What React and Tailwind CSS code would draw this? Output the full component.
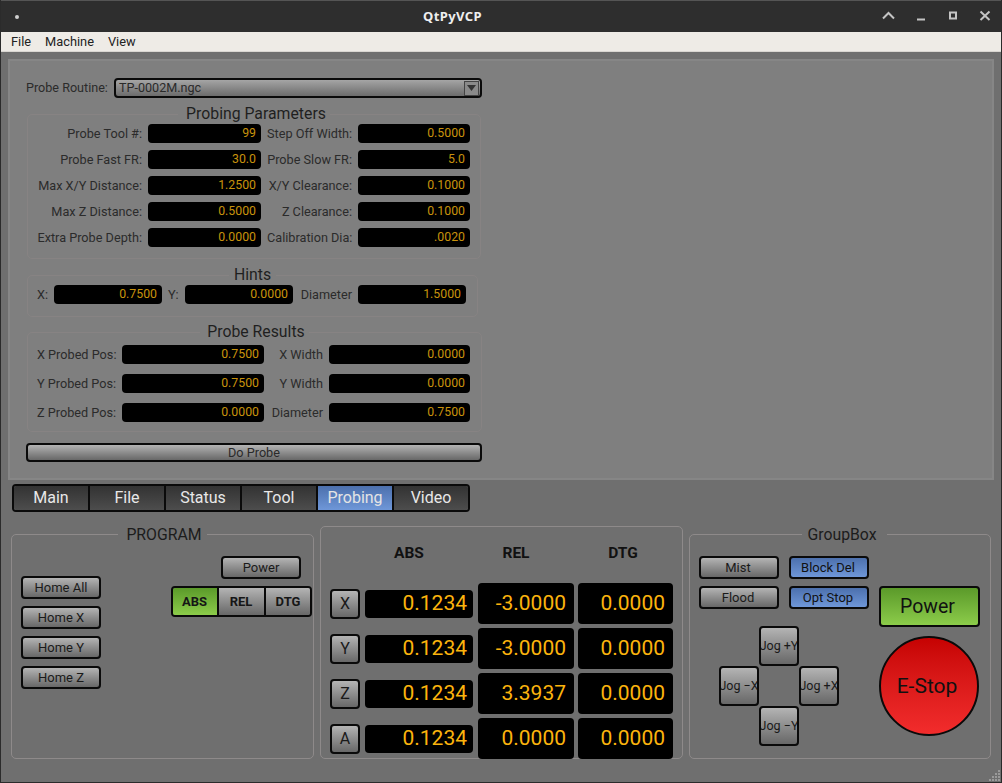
const btn = "border-2 border-[#0a0a0a] bg-gradient-to-b from-[#b4b4b4] to-[#686868] text-[#1a1a1a] rounded-[4px] flex items-center justify-center whitespace-nowrap overflow-hidden";
const blue = "border-2 border-[#0a0a0a] bg-gradient-to-b from-[#4c70ad] to-[#6f97d8] text-[#111] rounded-[4px] flex items-center justify-center whitespace-nowrap overflow-hidden";

function Field({ children, cls = "h-[19px]" }) {
  return <div className={`bg-black rounded-[4px] text-right pr-[5px] text-[#c8920c] text-[12.3px] leading-[19px] ${cls}`}>{children}</div>;
}
function Lbl({ children, left }) {
  return <div className={`text-[12.7px] leading-[19px] text-[#2b2b2b] whitespace-nowrap ${left ? "text-left" : "text-right"}`}>{children}</div>;
}
function Group({ title, cls, children, dim, legendCls = "px-[5px]" }) {
  return (
    <fieldset className={`border rounded-[5px] ${dim ? "border-[#878383]" : "border-[#8e8a8a]"} ${cls}`}>
      <legend className={`mx-auto leading-[16px] text-[15.8px] ${dim ? "text-[#1f1f1f]" : "text-[#1c1c1c] pt-px"} ${legendCls}`}>{title}</legend>
      {children}
    </fieldset>
  );
}
function Tab({ children, active, last }) {
  return (
    <div className={`${last ? "flex-1" : "w-[76px] border-r-[2px] border-[#0a0a0a]"} shrink-0 h-full flex items-center justify-center text-[16px] ${active ? "bg-gradient-to-b from-[#4c70ad] to-[#6f97d8] text-[#e4e4e4]" : "bg-gradient-to-b from-[#333333] to-[#4d4d4d] text-[#e8e8e8]"}`}>{children}</div>
  );
}
function Jog({ children, cls }) {
  return <div className={`w-[40px] h-[40px] text-[12.5px] ${btn} ${cls}`}>{children}</div>;
}
function DroRow({ axis, abs, rel, dtg }) {
  const big = "bg-black rounded-[4px] text-[#fcb40d] text-[21px] text-right flex items-center justify-end";
  return (
    <div className="flex items-center h-[41px]">
      <div className={`w-[30px] h-[30px] text-[16px] ${btn}`}>{axis}</div>
      <div className={`w-[108px] h-[28px] ml-[5px] pr-[6px] ${big}`}>{abs}</div>
      <div className={`w-[96px] h-[41px] ml-[5px] pr-[8px] ${big}`}>{rel}</div>
      <div className={`w-[95px] h-[41px] ml-[4px] pr-[8px] ${big}`}>{dtg}</div>
    </div>
  );
}

export default function App() {
  return (
    <div className="w-[1002px] h-[783px] bg-[#6f6f6f] flex flex-col overflow-hidden relative border-x border-b border-[#2b2b2b]" style={{ fontFamily: "Roboto, sans-serif" }}>
      <div className="h-[32px] shrink-0 bg-[#2e2e2e] border-t border-[#555] flex items-center text-[#d6d6d6] relative -mx-px">
        <div className="w-[4px] h-[4px] rounded-full bg-[#cfcfcf] ml-[15px]" />
        <div className="flex-1 text-center text-[13px] font-bold tracking-[0.4px] text-[#efefef] pl-[5px]" style={{ fontFamily: "'Noto Sans', sans-serif" }}>QtPyVCP</div>
        <svg width="110" height="16" viewBox="0 0 110 16" className="mr-[11px] mb-[1px]" fill="none" stroke="#c4c4c4" strokeWidth="2">
          <path d="M2 10.5 L7.5 5 L13 10.5" />
          <path d="M36 11.5 H44" />
          <rect x="69" y="4.5" width="6" height="6" />
          <path d="M99.5 3.5 L108.5 12 M108.5 3.5 L99.5 12" />
        </svg>
      </div>
      <div className="h-[20px] shrink-0 bg-[#eeebe6] border-b border-[#d9d6d1] flex items-center pl-[11px] gap-[14px] text-[12.8px] text-[#222] -mx-px">
        <span>File</span><span>Machine</span><span>View</span>
      </div>

      <div className="mx-[7px] mt-[7px] h-[421px] shrink-0 border-2 border-[#868686] bg-[#7f7f7f] pl-[16px] flex flex-col">
        <div className="flex items-center mt-[17px] h-[20px]">
          <div className="w-[88px] text-[12.6px] text-[#2b2b2b] whitespace-nowrap">Probe Routine:</div>
          <div className="w-[368px] h-[20px] border-2 border-[#0a0a0a] rounded-[4px] bg-gradient-to-b from-[#a5a5a5] to-[#6c6c6c] flex items-center pl-[3px] text-[12.6px] text-[#2a2a2a]">
            <span className="flex-1">TP-0002M.ngc</span>
            <span className="w-[15px] h-[15px] mr-px bg-[#8a8a8a] border border-[#444] flex items-center justify-center">
              <svg width="9" height="6" viewBox="0 0 9 6"><path d="M0 0H9L4.5 6Z" fill="#333" /></svg>
            </span>
          </div>
        </div>

        <Group dim title="Probing Parameters" legendCls="pl-[8px] pr-[4px]" cls="w-[454px] h-[153px] ml-px mt-[8px]">
          <div className="grid grid-cols-[114px_113px_85px_112px] gap-x-[6px] gap-y-[7px] mt-[2px]">
            <Lbl>Probe Tool #:</Lbl><Field>99</Field><Lbl>Step Off Width:</Lbl><Field>0.5000</Field>
            <Lbl>Probe Fast FR:</Lbl><Field>30.0</Field><Lbl>Probe Slow FR:</Lbl><Field>5.0</Field>
            <Lbl>Max X/Y Distance:</Lbl><Field>1.2500</Field><Lbl>X/Y Clearance:</Lbl><Field>0.1000</Field>
            <Lbl>Max Z Distance:</Lbl><Field>0.5000</Field><Lbl>Z Clearance:</Lbl><Field>0.1000</Field>
            <Lbl>Extra Probe Depth:</Lbl><Field>0.0000</Field><Lbl>Calibration Dia:</Lbl><Field>.0020</Field>
          </div>
        </Group>

        <Group dim title="Hints" cls="w-[451px] h-[50px] ml-px mt-[8px]">
          <div className="grid grid-cols-[11px_108px_11px_108px_53px_108px] gap-x-[6px] ml-[9px] mt-[2px]">
            <Lbl left>X:</Lbl><Field>0.7500</Field><Lbl left>Y:</Lbl><Field>0.0000</Field><Lbl>Diameter</Lbl><Field>1.5000</Field>
          </div>
        </Group>

        <Group dim title="Probe Results" legendCls="pl-[7px] pr-[4px]" cls="w-[455px] h-[108px] ml-px mt-[7px]">
          <div className="grid grid-cols-[79px_142px_53px_141px] gap-x-[6px] gap-y-[10px] ml-[9px] mt-[5px]">
            <Lbl left>X Probed Pos:</Lbl><Field>0.7500</Field><Lbl>X Width</Lbl><Field>0.0000</Field>
            <Lbl left>Y Probed Pos:</Lbl><Field>0.7500</Field><Lbl>Y Width</Lbl><Field>0.0000</Field>
            <Lbl left>Z Probed Pos:</Lbl><Field>0.0000</Field><Lbl>Diameter</Lbl><Field>0.7500</Field>
          </div>
        </Group>

        <div className={`w-[456px] h-[19px] mt-[11px] text-[12.7px] ${btn} text-[#2a2a2a]`}>Do Probe</div>
      </div>

      <div className="flex h-[28px] w-[458px] shrink-0 ml-[11px] mt-[4px] border-2 border-[#0a0a0a] rounded-[4px] overflow-hidden">
        <Tab>Main</Tab><Tab>File</Tab><Tab>Status</Tab><Tab>Tool</Tab><Tab active>Probing</Tab><Tab last>Video</Tab>
      </div>

      <div className="flex gap-[6px] ml-[10px] mt-[14px] h-[233px]">
        <Group title="PROGRAM" legendCls="pl-[8px] pr-[5px]" cls="w-[303px] h-[233px] px-[9px] relative">
          <div className="flex justify-between h-full">
            <div className="flex flex-col gap-[7px] mt-[33px] text-[13px]">
              {["Home All", "Home X", "Home Y", "Home Z"].map((t) => (
                <div key={t} className={`w-[80px] h-[23px] ${btn}`}>{t}</div>
              ))}
            </div>
            <div className="flex flex-col items-end mt-[13px] -mr-[8px]">
              <div className={`w-[80px] h-[23px] mr-[11px] text-[13px] ${btn}`}>Power</div>
              <div className="flex w-[141px] h-[31px] mt-[7px] border-2 border-[#0a0a0a] rounded-[4px] overflow-hidden text-[13px] font-bold text-[#161616]">
                <div className="w-[46px] pr-px flex items-center justify-center bg-gradient-to-b from-[#5b9a2a] to-[#8ccc4a] border-r-2 border-[#0a0a0a]">ABS</div>
                <div className="w-[47px] pr-px flex items-center justify-center bg-gradient-to-b from-[#b4b4b4] to-[#686868] border-r-2 border-[#0a0a0a]">REL</div>
                <div className="flex-1 flex items-center justify-center bg-gradient-to-b from-[#b4b4b4] to-[#686868]">DTG</div>
              </div>
            </div>
          </div>
        </Group>

        <div className="w-[363px] h-[233px] border border-[#8e8a8a] rounded-[5px] pl-[9px]">
          <div className="flex h-[52px] pt-[2px] items-center text-[15.5px] font-bold text-[#111] text-center">
            <div className="w-[35px]" /><div className="w-[88px]">ABS</div><div className="w-[126px]">REL</div><div className="w-[88px]">DTG</div>
          </div>
          <div className="flex flex-col gap-[4px] mt-[4px]">
            <DroRow axis="X" abs="0.1234" rel="-3.0000" dtg="0.0000" />
            <DroRow axis="Y" abs="0.1234" rel="-3.0000" dtg="0.0000" />
            <DroRow axis="Z" abs="0.1234" rel="3.3937" dtg="0.0000" />
            <DroRow axis="A" abs="0.1234" rel="0.0000" dtg="0.0000" />
          </div>
        </div>

        <Group title="GroupBox" legendCls="pl-[5px] pr-[10px]" cls="w-[302px] h-[233px] pl-[9px]">
          <div className="flex">
            <div className="w-[180px]">
              <div className="grid grid-cols-[80px_80px] gap-x-[10px] gap-y-[7px] mt-[13px] text-[13px]">
                <div className={`h-[23px] pr-[2px] ${btn}`}>Mist</div>
                <div className={`h-[23px] pr-[2px] ${blue}`}>Block Del</div>
                <div className={`h-[23px] pr-[2px] ${btn}`}>Flood</div>
                <div className={`h-[23px] pr-[2px] ${blue}`}>Opt Stop</div>
              </div>
              <div className="grid grid-cols-[40px_40px_40px] grid-rows-[40px_40px_40px] ml-[20px] mt-[17px]">
                <Jog cls="col-start-2">Jog +Y</Jog>
                <Jog cls="col-start-1 row-start-2">Jog −X</Jog>
                <Jog cls="col-start-3 row-start-2">Jog +X</Jog>
                <Jog cls="col-start-2 row-start-3">Jog −Y</Jog>
              </div>
            </div>
            <div className="flex flex-col mt-[43px]">
              <div className="w-[101px] h-[41px] pr-[4px] pt-px border-2 border-[#0a0a0a] rounded-[4px] bg-gradient-to-b from-[#5b9a2a] to-[#8ccc4a] text-[19.5px] text-[#111] flex items-center justify-center">Power</div>
              <div className="w-[100px] h-[100px] mt-[9px] pr-[4px] pt-[2px] rounded-full border-2 border-[#0a0a0a] bg-gradient-to-b from-[#c60202] to-[#f22c2c] text-[21px] text-[#111] flex items-center justify-center">E-Stop</div>
            </div>
          </div>
        </Group>
      </div>

      <svg width="14" height="14" viewBox="0 0 14 14" className="absolute right-0 bottom-0" fill="#9a9a9a">
        <rect x="11" y="2" width="2" height="2" /><rect x="8" y="5" width="2" height="2" /><rect x="11" y="5" width="2" height="2" />
        <rect x="5" y="8" width="2" height="2" /><rect x="8" y="8" width="2" height="2" /><rect x="11" y="8" width="2" height="2" />
        <rect x="2" y="11" width="2" height="2" /><rect x="5" y="11" width="2" height="2" /><rect x="8" y="11" width="2" height="2" /><rect x="11" y="11" width="2" height="2" />
      </svg>
    </div>
  );
}
